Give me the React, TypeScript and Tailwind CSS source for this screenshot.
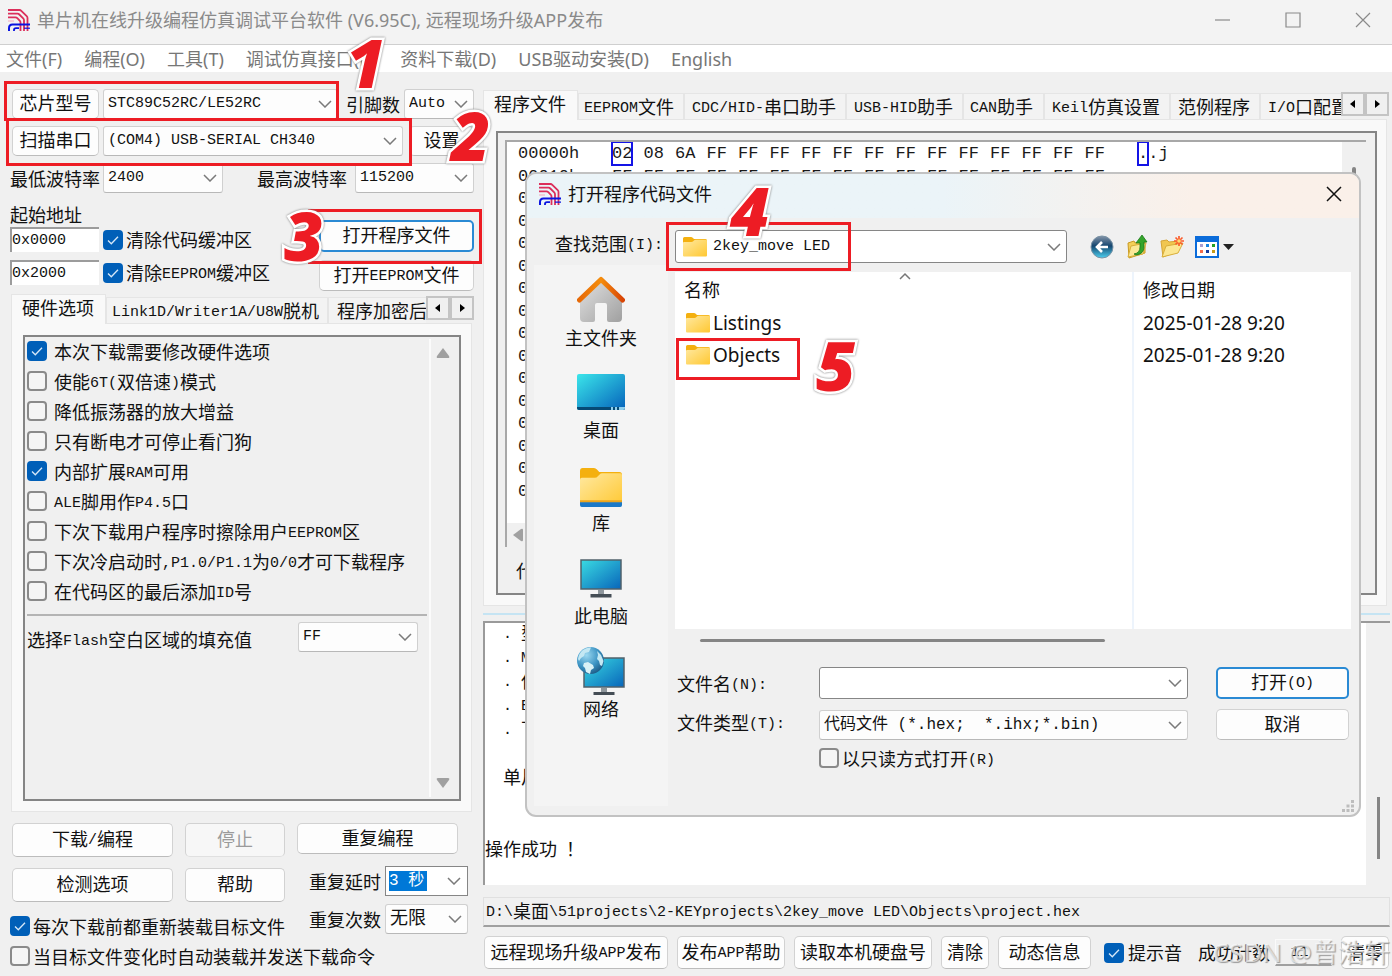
import React from "react";

const MONO = "font-['Liberation_Mono','Noto_Sans_CJK_SC',monospace]";
const UI = "font-['Noto_Sans','Noto_Sans_CJK_SC',sans-serif]";

/* Latin runs are set at half the width of the Chinese characters. */
function T({ children }: { children: string }) {
  return (
    <>
      {children.split(/([\x20-\x7e]+)/).map((part, i) =>
        i % 2 ? (
          <span key={i} className={`whitespace-pre align-[2px] text-[15px] leading-none ${MONO}`}>
            {part}
          </span>
        ) : (
          part
        ),
      )}
    </>
  );
}

function Logo() {
  return (
    <svg width="22" height="22" viewBox="0 0 22 22" fill="none" className="shrink-0">
      <g stroke="#dc2f5b" strokeWidth="1.8">
        <path d="M0 1h11.500q1 0 1.800.8l5.400 5.400q.8.8.8 1.800v13" />
        <path d="M0 4.700h9.500q1 0 1.800.8l3.900 3.900q.8.8.8 1.800V22" />
        <path d="M0 8.400h7.500q1 0 1.800.8l2.400 2.400q.8.8.8 1.800V22" />
        <path d="M0 12h6" stroke="#f4a8bb" strokeWidth="1" />
      </g>
      <g stroke="#0a14e0">
        <path d="M1 22v-3q0-3.500 3.500-3.500H22" strokeWidth="2" />
        <path d="M6 22v-1q0-1.800 2-1.800h3" strokeWidth="1.800" />
        <path d="M16 19.200h6" strokeWidth="1.200" />
      </g>
    </svg>
  );
}

function Chevron() {
  return (
    <svg width="14" height="8" viewBox="0 0 14 8" fill="none" stroke="#7a7a7a" strokeWidth="1.5">
      <path d="M1 1l6 6 6-6" />
    </svg>
  );
}

function Select({ label, value, className = "", size = "text-[15px]" }: { label: string; value: string; className?: string; size?: string }) {
  return (
    <span className={`relative flex h-[30px] ${MONO} ${className}`}>
      <select
        aria-label={label}
        className={`w-full appearance-none whitespace-pre rounded-[3px] border border-[#d0d0d0] border-b-[#b8b8b8] bg-[#fdfdfd] pl-1 pr-6 ${size}`}
      >
        <option>{value}</option>
      </select>
      <span className="pointer-events-none absolute inset-y-0 right-[6px] flex items-center">
        <Chevron />
      </span>
    </span>
  );
}

function Btn({ children, className = "", primary = false, disabled = false }: { children: string; className?: string; primary?: boolean; disabled?: boolean }) {
  return (
    <button
      disabled={disabled}
      className={`shrink-0 whitespace-nowrap rounded-[5px] border pb-1 text-center ${primary ? "border-2 border-[#2a8ad4]" : "border-[#d2d2d2] border-b-[#bcbcbc]"} ${disabled ? "border-b-[#e0e0e0] bg-[#f7f7f7] text-[#9b9b9b]" : "bg-[#fdfdfd]"} ${className}`}
    >
      <T>{children}</T>
    </button>
  );
}

function Check({ label, checked = false, gap = "gap-[7px]" }: { label: string; checked?: boolean; gap?: string }) {
  return (
    <label className={`flex h-5 items-center whitespace-nowrap ${gap}`}>
      <span className="grid shrink-0">
        <input
          type="checkbox"
          defaultChecked={checked}
          className="peer size-5 appearance-none rounded-[4px] border-2 border-[#8a8a8a] bg-[#f5f5f5] [grid-area:1/1] checked:border-[#005fb8] checked:bg-[#005fb8]"
        />
        <svg viewBox="0 0 20 20" fill="none" stroke="#d6e8f8" strokeWidth="1.3" className="pointer-events-none invisible size-5 [grid-area:1/1] peer-checked:visible">
          <path d="M5 10.500l3.300 3.300L15 6.800" />
        </svg>
      </span>
      <span className="pb-px">
        <T>{label}</T>
      </span>
    </label>
  );
}

function TabArrows() {
  return (
    <div className="mt-[2px] flex h-6 w-12 shrink-0">
      {["M7 0v8L2 4z", "M3 0v8l5-4z"].map((d, i) => (
        <button key={d} aria-label={i ? "下一个" : "上一个"} className="flex flex-1 items-center justify-center border-2 border-[#c4c4c4] bg-[#f0f0f0]">
          <svg width="10" height="8" viewBox="0 0 10 8">
            <path d={d} />
          </svg>
        </button>
      ))}
    </div>
  );
}

function Tab({ children, active = false, className = "" }: { children: string; active?: boolean; className?: string }) {
  return (
    <button
      role="tab"
      aria-selected={active}
      className={`shrink-0 whitespace-nowrap border border-[#e5e5e5] text-left ${active ? "h-[30px] border-b-0 bg-[#f9f9f9] pb-[6px]" : "h-[27px] bg-[#f3f3f3] pb-[2px]"} ${className}`}
    >
      <T>{children}</T>
    </button>
  );
}

function Title() {
  return (
    <header className={`flex h-[45px] items-center border-b border-[#cfcfcf] bg-[#f3f3f3] pb-1 pl-2 text-[18px] text-[#8a8a8a] ${UI}`}>
      <Logo />
      <h1 className="ml-[7px] flex-1 whitespace-nowrap">单片机在线升级编程仿真调试平台软件 (V6.95C), 远程现场升级APP发布</h1>
      <div className="flex">
        {["M0 8h15", "M1 1h14v14H1z", "M1 1l14 14M15 1L1 15"].map((d, i) => (
          <button key={d} aria-label={["最小化", "最大化", "关闭"][i]} className="flex w-[70px] justify-center pl-3">
            <svg width="16" height="16" viewBox="0 0 16 16" fill="none" stroke="#8a8a8a" strokeWidth="1.2">
              <path d={d} />
            </svg>
          </button>
        ))}
      </div>
    </header>
  );
}

const MENU = ["文件(F)", "编程(O)", "工具(T)", "调试仿真接口(N)", "资料下载(D)", "USB驱动安装(D)", "English"];

const OPTIONS: [string, boolean][] = [
  ["本次下载需要修改硬件选项", true],
  ["使能6T(双倍速)模式", false],
  ["降低振荡器的放大增益", false],
  ["只有断电才可停止看门狗", false],
  ["内部扩展RAM可用", true],
  ["ALE脚用作P4.5口", false],
  ["下次下载用户程序时擦除用户EEPROM区", false],
  ["下次冷启动时,P1.0/P1.1为0/0才可下载程序", false],
  ["在代码区的最后添加ID号", false],
];

function AddressRow({ value, label }: { value: string; label: string }) {
  return (
    <div className="flex h-[25px] items-center">
      <input aria-label={label} defaultValue={value} className={`mr-1 h-[25px] w-[89px] border-l-2 border-t-2 border-[#9c9c9c] bg-white text-[15px] ${MONO}`} />
      <Check label={label} checked gap="gap-[3px]" />
    </div>
  );
}

function LeftPanel() {
  return (
    <section className="flex w-[483px] shrink-0 flex-col pb-[10px] pl-[10px] pr-[9px] pt-[17px]">
      <div className="flex flex-col gap-[7px]">
        <div className="flex items-center">
          <Btn className="ml-[2px] h-[30px] w-[87px]">芯片型号</Btn>
          <Select label="芯片型号" value="STC89C52RC/LE52RC" className="ml-1 w-[235px]" />
          <span className="ml-2 w-[58px]">引脚数</span>
          <Select label="引脚数" value="Auto" className="flex-1" />
        </div>
        <div className="flex items-center">
          <Btn className="ml-[2px] h-[30px] w-[87px]">扫描串口</Btn>
          <Select label="扫描串口" value="(COM4) USB-SERIAL CH340" className="ml-1 w-[300px]" />
          <Btn className="ml-[6px] h-[30px] flex-1">设置</Btn>
        </div>
        <div className="flex items-center">
          <span className="w-[93px]">最低波特率</span>
          <Select label="最低波特率" value="2400" className="w-[120px]" />
          <span className="ml-[34px] flex-1">最高波特率</span>
          <Select label="最高波特率" value="115200" className="w-[119px]" />
        </div>
      </div>

      <div className="mt-[10px] flex justify-between">
        <div>
          <div className="h-6">起始地址</div>
          <div className="flex flex-col gap-2">
            <AddressRow value="0x0000" label="清除代码缓冲区" />
            <AddressRow value="0x2000" label="清除EEPROM缓冲区" />
          </div>
        </div>
        <div className="flex w-[155px] flex-col gap-2 pt-[17px]">
          <Btn primary className="h-8">打开程序文件</Btn>
          <Btn className="h-[31px]">打开EEPROM文件</Btn>
        </div>
      </div>

      <div role="tablist" className="relative z-10 -mb-px mt-[3px] flex pl-px">
        <div className="flex min-w-0 flex-1 items-end overflow-hidden">
          <Tab active className="w-[95px] px-[10px]">硬件选项</Tab>
          <Tab className="w-[222px] pl-[5px]">Link1D/Writer1A/U8W脱机</Tab>
          <Tab className="pl-2">程序加密后传输</Tab>
        </div>
        <TabArrows />
      </div>
      <div className="ml-px mr-[2px] flex flex-1 flex-col border border-[#e5e5e5] bg-[#f9f9f9] p-[11px] pb-[10px] pr-[10px]">
        <div className="flex flex-1 border-2 border-[#858585] bg-[#f0f0f0] py-[2px]">
          <div className="min-w-0 flex-1 pl-[2px]">
            <div className="flex flex-col gap-[10px] pt-[2px]">
              {OPTIONS.map(([label, on]) => (
                <Check key={label} label={label} checked={on} />
              ))}
            </div>
            <hr className="mt-[13px] border-t-2 border-[#b4b4b4]" />
            <div className="mt-[6px] flex items-center">
              <span className="w-[271px] pt-1">
                <T>选择Flash空白区域的填充值</T>
              </span>
              <Select label="填充值" value="FF" className="w-[120px]" />
            </div>
          </div>
          <div className="ml-[2px] flex w-[30px] flex-col items-center justify-between border-l-2 border-[#fbfbfb] py-[9px] pr-1">
            <svg width="14" height="10" viewBox="0 0 14 10" fill="#a0a0a0">
              <path d="M7 0l6 8q1 2-1 2H2q-2 0-1-2z" />
            </svg>
            <svg width="14" height="10" viewBox="0 0 14 10" fill="#a0a0a0">
              <path d="M7 10L1 2q-1-2 1-2h10q2 0 1 2z" />
            </svg>
          </div>
        </div>
      </div>

      <div className="mt-[11px] flex gap-3 pl-[2px]">
        <div className="w-[273px]">
          <div className="grid grid-cols-[161px_100px] gap-x-3 gap-y-[11px]">
            <Btn className="h-[34px]">下载/编程</Btn>
            <Btn disabled className="h-[34px]">停止</Btn>
            <Btn className="h-[34px]">检测选项</Btn>
            <Btn className="h-[34px]">帮助</Btn>
          </div>
          <div className="-ml-[2px] mt-[14px]">
            <Check checked label="每次下载前都重新装载目标文件" gap="gap-[3px]" />
          </div>
        </div>
        <div className="flex w-[171px] flex-col gap-2">
          <Btn className="mb-1 h-[31px] w-[161px]">重复编程</Btn>
          <div className="flex items-center justify-between pl-3">
            <label htmlFor="delay">重复延时</label>
            <span className="flex h-[30px] w-[83px] items-center justify-between border border-[#868686] bg-white pl-[3px] pr-[6px]">
              <input id="delay" defaultValue="3 秒" className={`h-5 w-[38px] bg-[#0078d7] text-[16px] text-white ${MONO}`} />
              <Chevron />
            </span>
          </div>
          <div className="flex items-center justify-between pl-3">
            <span>重复次数</span>
            <Select label="重复次数" value="无限" size="text-[18px]" className="w-[83px]" />
          </div>
        </div>
      </div>
      <div className="mt-[10px]">
        <Check label="当目标文件变化时自动装载并发送下载命令" gap="gap-[3px]" />
      </div>
    </section>
  );
}

const HEX_BYTES: string[][] = [
  ["02", "08", "6A", ...Array<string>(13).fill("FF")],
  Array<string>(16).fill("FF"),
];

function HexView() {
  return (
    <div className="flex h-[407px] flex-col overflow-hidden border-l-2 border-t-2 border-[#a8a8a8] bg-white">
      <div className="flex flex-1">
        <div className={`grid h-[361px] flex-1 grid-rows-16 overflow-hidden pl-[11px] pt-px text-[17px] ${MONO}`}>
          {Array.from({ length: 16 }, (_, r) => (
            <div key={r} className="flex items-center text-[#1a1a1a]">
              <span className="w-[94px] shrink-0">{`000${r.toString(16).toUpperCase()}0h`}</span>
              <span className="grid w-[504px] shrink-0 grid-cols-16">
                {(HEX_BYTES[r] ?? []).map((b, c) => (
                  <span key={c}>
                    <span className={r + c === 0 ? "bg-white py-[2px] outline-2 -outline-offset-1 outline-[#1414e6]" : ""}>{b}</span>
                  </span>
                ))}
              </span>
              {r === 0 && (
                <span className="ml-[22px]">
                  <span className="py-[2px] outline-2 -outline-offset-1 outline-[#1414e6]">.</span>.j
                </span>
              )}
            </div>
          ))}
        </div>
        <div className="flex w-6 justify-center bg-[#f0f0f0] pt-[25px]">
          <div className="h-10 w-1 rounded bg-[#858585]" />
        </div>
      </div>
      <div className="flex h-6 items-center bg-[#f0f0f0] pl-[6px]">
        <svg width="10" height="14" viewBox="0 0 10 14" fill="#a0a0a0">
          <path d="M0 7l8-6q2-1 2 1v10q0 2-2 1z" />
        </svg>
      </div>
    </div>
  );
}

const LOG = ["  . 型号: STC89C52RC", "  . MCU固件版本号", "  . 使用扩展RAM", "  . EEPROM", "  . 下次下载", "", "  单片机型号", "", "", "操作成功 ！"];

function RightPanel() {
  return (
    <section className="flex min-w-0 flex-1 flex-col pb-[7px] pt-[18px]">
      <div role="tablist" className="relative z-10 -mb-px mr-[3px] flex">
        <div className="flex min-w-0 flex-1 items-end overflow-hidden">
          <Tab active className="w-[95px] pl-[10px]">程序文件</Tab>
          <Tab className="w-[106px] pl-[5px]">EEPROM文件</Tab>
          <Tab className="w-[162px] pl-[7px]">CDC/HID-串口助手</Tab>
          <Tab className="w-[117px] pl-[7px]">USB-HID助手</Tab>
          <Tab className="w-[81px] pl-[6px]">CAN助手</Tab>
          <Tab className="w-[126px] pl-[7px]">Keil仿真设置</Tab>
          <Tab className="w-[90px] pl-[7px]">范例程序</Tab>
          <Tab className="pl-[7px]">I/O口配置工具</Tab>
        </div>
        <TabArrows />
      </div>
      <div className="mr-[5px] border border-[#e5e5e5] bg-[#f9f9f9] pb-[10px] pl-3 pr-[9px] pt-[11px]">
        <div className="h-[464px] border-2 border-[#858585] bg-[#f0f0f0] pl-[7px] pr-[9px] pt-[7px]">
          <HexView />
          <div className="flex h-[46px] items-center pl-[11px]">代码长度</div>
        </div>
      </div>
      <div className="mr-[2px] mt-[7px] h-[2px] bg-[#c5e4f3]" />
      <div className="mr-[2px] mt-[6px] flex min-h-[264px] flex-1 border-l-2 border-t-2 border-[#9a9a9a] bg-white">
        <div className="flex-1">
          {LOG.map((line, i) => (
            <div key={i} className="h-6 leading-[18px]">
              <T>{line}</T>
            </div>
          ))}
        </div>
        <div className="flex w-6 justify-center bg-[#f0f0f0] pt-[174px]">
          <div className="h-[62px] w-[3px] bg-[#858585]" />
        </div>
      </div>
      <div className="mr-[2px] mt-3 flex h-[30px] items-center border border-b-2 border-[#e0e0e0] border-b-[#a0a0a0] pb-[3px] pl-[2px]">
        <span>
          <T>D:\桌面\51projects\2-KEYprojects\2key_move LED\Objects\project.hex</T>
        </span>
      </div>
      <div className="mr-[3px] mt-[9px] flex h-[33px] items-center gap-[9px] pl-px">
        <Btn className="h-full w-[184px]">远程现场升级APP发布</Btn>
        <Btn className="h-full w-[108px]">发布APP帮助</Btn>
        <Btn className="h-full w-[138px]">读取本机硬盘号</Btn>
        <Btn className="h-full w-[48px]">清除</Btn>
        <Btn className="mr-1 h-full w-[93px]">动态信息</Btn>
        <Check checked label="提示音" gap="gap-1" />
        <label className="ml-[7px] flex items-center gap-[5px] whitespace-nowrap">
          <span className="pb-[2px]">成功计数</span>
          <input defaultValue="11" className={`h-[27px] w-[57px] border border-b-2 border-[#fafafa] border-b-[#a0a0a0] pr-2 text-center text-[15px] ${MONO}`} />
        </label>
        <Btn className="h-full w-[48px]">清零</Btn>
      </div>
    </section>
  );
}

function Folder({ big = false }: { big?: boolean }) {
  return (
    <svg viewBox="0 0 24 20" className={big ? "h-[39px] w-[42px] shrink-0" : "h-5 w-6 shrink-0"} preserveAspectRatio="none">
      <defs>
        <linearGradient id="folder" x1="0" y1="0" x2="1" y2="1">
          <stop offset="0" stopColor="#ffe9a2" />
          <stop offset="1" stopColor="#ffc832" />
        </linearGradient>
      </defs>
      <path d="M0 1.500Q0 0 1.500 0h6.500q1 0 1.700.8L11 2H22.500Q24 2 24 3.500V9H0z" fill="#f4b00f" />
      <path d="M0 6q0-1 1-1h7.500q1 0 1.700-.8l1-.9q.6-.6 1.500-.6H23q1 0 1 1V18.500q0 1-1 1H1q-1 0-1-1z" fill="url(#folder)" />
      {big && <path d="M0 16.500h24V17.800H0z" fill="#eda51c" />}
      {big && <path d="M0 17.500h24V19q0 1-1 1H1q-1 0-1-1z" fill="#1a78c8" />}
    </svg>
  );
}

function Screen({ globe = false }: { globe?: boolean }) {
  return (
    <svg width="48" height={globe ? 48 : 39} viewBox={globe ? "0 0 48 48" : "0 0 48 39"}>
      <defs>
        <linearGradient id="screen" x1="0" y1="0" x2="1" y2="1">
          <stop offset="0" stopColor="#3adbe2" />
          <stop offset="1" stopColor="#0865ba" />
        </linearGradient>
        <radialGradient id="globe" cx=".35" cy=".3" r=".75">
          <stop offset="0" stopColor="#9bd8f0" />
          <stop offset=".6" stopColor="#3d94c4" />
          <stop offset="1" stopColor="#1e5b86" />
        </radialGradient>
      </defs>
      <g transform={globe ? "translate(3 10)" : undefined}>
        <path d="M21 31h6v4h-6z" fill="#8e969c" />
        <path d="M13.500 35h21v3.500h-21z" fill="#444d55" />
        <rect x="4" y="1" width="40" height="29" fill="url(#screen)" stroke="#50616b" strokeWidth="1.500" />
      </g>
      {globe && (
        <g>
          <circle cx="13.500" cy="13.500" r="13.500" fill="url(#globe)" />
          <path d="M1 12q1-6 5-9 4-3 8-2.500l-2 4.500-4 1-1 3-3 2-2 3z" fill="#c4e8f3" />
          <path d="M7 16l4-1 5 3 1 3-3 2-1 4-4-2-1-4-2-2z" fill="#d9f1f6" />
          <path d="M20 4l4 4 2.500 6-1.500 5-2-1-1-4-2-2 1-4z" fill="#c4e8f3" />
        </g>
      )}
    </svg>
  );
}

function House() {
  return (
    <svg width="48" height="47" viewBox="0 0 48 47">
      <defs>
        <linearGradient id="wall" x1="0" y1="0" x2="1" y2="1">
          <stop offset="0" stopColor="#e2e2e2" />
          <stop offset="1" stopColor="#a0a0a0" />
        </linearGradient>
        <linearGradient id="roof">
          <stop offset="0" stopColor="#e66a08" />
          <stop offset=".5" stopColor="#f58d0c" />
          <stop offset="1" stopColor="#d84505" />
        </linearGradient>
      </defs>
      <path d="M24 4L3 26V42q0 4 4 4h9q2 0 2-2V29q0-2 2-2h8q2 0 2 2V44q0 2 2 2h9q4 0 4-4V26z" fill="url(#wall)" />
      <path d="M2.500 24L24 3.500 45.500 24" fill="none" stroke="url(#roof)" strokeWidth="5" strokeLinecap="round" strokeLinejoin="round" />
    </svg>
  );
}

function Desktop() {
  return (
    <svg width="48" height="37" viewBox="0 0 48 37">
      <defs>
        <linearGradient id="desk" x1="0" y1="0" x2="1" y2="1">
          <stop offset="0" stopColor="#3be6ea" />
          <stop offset="1" stopColor="#0562bb" />
        </linearGradient>
      </defs>
      <rect y="0" width="48" height="36" rx="2" fill="url(#desk)" />
      <path d="M0 33h48v1q0 2-2 2H2q-2 0-2-2z" fill="#064a75" />
      <path d="M34 33h2v3h-2zM38 33h2v3h-2zM42 33h6v1q0 2-2 2h-4z" fill="#8fd0ee" />
    </svg>
  );
}

const PLACES: [string, React.ReactNode, string][] = [
  ["主文件夹", <House />, "pt-[11px] h-[89px]"],
  ["桌面", <Desktop />, "pt-5 h-[92px]"],
  ["库", <Folder big />, "pt-[22px] h-[93px]"],
  ["此电脑", <Screen />, "pt-5 h-[93px]"],
  ["网络", <Screen globe />, "pt-[15px] h-[93px]"],
];

function Toolbar() {
  return (
    <div className="ml-[23px] flex items-center gap-[11px]">
      <button aria-label="后退">
        <svg width="24" height="24" viewBox="0 0 24 24">
          <defs>
            <linearGradient id="back" x2="0" y2="1">
              <stop offset="0" stopColor="#8494a8" />
              <stop offset=".45" stopColor="#15466f" />
              <stop offset="1" stopColor="#4cd0f0" />
            </linearGradient>
          </defs>
          <circle cx="12" cy="12" r="11" fill="url(#back)" stroke="#7992a5" />
          <path d="M18 12H7M12 7l-5 5 5 5" fill="none" stroke="#fff" strokeWidth="2.600" />
        </svg>
      </button>
      <button aria-label="向上一级">
        <svg width="24" height="24" viewBox="0 0 24 24">
          <path d="M3 8l6-2 1 2 10-2v12L4 23z" fill="#f3cf58" stroke="#c99a24" />
          <path d="M3 22l3-11 15-3-3 11z" fill="#fbe897" stroke="#d8ae3a" />
          <path d="M9 19q6-1 6-7V8h-4l6-8 5 7h-3v5q0 7-8 8z" fill="#35a52c" stroke="#1a7a18" strokeWidth=".8" />
        </svg>
      </button>
      <button aria-label="新建文件夹">
        <svg width="24" height="24" viewBox="0 0 24 24">
          <path d="M1 6l6-1 2 2 9-1v10L3 22z" fill="#f0c650" stroke="#d5a436" />
          <path d="M2 22L6 11l17-3-5 10z" fill="#fce793" stroke="#d8ae3a" />
          <path d="M19 1v10M14 6h10M15.500 2.500l7 7M22.500 2.500l-7 7" stroke="#fb5b2c" strokeWidth="1.700" />
          <circle cx="19" cy="6" r="1.800" fill="#ffdc72" />
        </svg>
      </button>
      <button aria-label="查看" className="flex items-center gap-1">
        <svg width="24" height="22" viewBox="0 0 24 22">
          <rect x="1" y="1" width="22" height="20" fill="#fff" stroke="#0b6cda" strokeWidth="2" />
          <path d="M1 1h22v5H1z" fill="#0b6cda" />
          <path d="M5 8h3v3H5z" fill="#a89dd0" />
          <path d="M11 8h3v3h-3z" fill="#1685e0" />
          <path d="M17 8h3v3h-3z" fill="#24a024" />
          <path d="M5 14h3v3H5z" fill="#f56c4a" />
          <path d="M11 14h3v3h-3z" fill="#173c9c" />
          <path d="M17 14h3v3h-3z" fill="#c79b18" />
        </svg>
        <svg width="11" height="6" viewBox="0 0 11 6">
          <path d="M0 0h11L5.500 6z" fill="#222" />
        </svg>
      </button>
    </div>
  );
}

function OpenDialog() {
  return (
    <div role="dialog" aria-label="打开程序代码文件" className="absolute left-[525px] top-[172px] z-20 w-[836px] overflow-hidden rounded-[11px] border-2 border-[#c2c2c2] bg-[#f0f0f0]">
      <div className={`flex h-11 items-center bg-linear-to-r from-[#ebf4f8] from-50% to-[#faf0e9] to-80% pb-1 pl-3 pr-[17px] ${UI}`}>
        <Logo />
        <h2 className="ml-[7px] flex-1">打开程序代码文件</h2>
        <button aria-label="关闭">
          <svg width="16" height="16" viewBox="0 0 16 16" stroke="#111" strokeWidth="1.500">
            <path d="M1 1l14 14M15 1L1 15" />
          </svg>
        </button>
      </div>
      <div className="flex h-[47px] items-center pt-[10px]">
        <label htmlFor="lookin" className="w-[148px] whitespace-nowrap pb-[8px] pl-7">
          <T>查找范围(I):</T>
        </label>
        <span className={`relative flex h-[33px] w-[392px] items-center ${MONO}`}>
          <select id="lookin" className="size-full appearance-none rounded-[3px] border border-[#868686] bg-white pl-[37px] text-[15px]">
            <option>2key_move LED</option>
          </select>
          <span className="pointer-events-none absolute left-2">
            <Folder />
          </span>
          <span className="pointer-events-none absolute right-[6px]">
            <Chevron />
          </span>
        </span>
        <Toolbar />
      </div>
      <div className="flex pl-[7px]">
        <nav className={`flex h-[541px] w-[134px] shrink-0 flex-col bg-[#f4f4f4] ${UI}`}>
          {PLACES.map(([name, icon, cls]) => (
            <button key={name} className={`flex shrink-0 flex-col items-center justify-between leading-6 ${cls}`}>
              {icon}
              <span className="mb-[4px]">{name}</span>
            </button>
          ))}
        </nav>
        <div className="ml-[7px] min-w-0 flex-1 pt-[7px]">
          <div className={`mr-2 flex h-[357px] bg-white ${UI}`}>
            <div className="relative w-[459px] shrink-0 border-r-2 border-[#edf4fc]">
              <svg width="12" height="8" viewBox="0 0 12 8" fill="none" stroke="#777" strokeWidth="1.500" className="absolute left-[224px] top-0">
                <path d="M1 7l5-5 5 5" />
              </svg>
              <div className="flex h-[35px] items-center pl-[9px]">名称</div>
              {["Listings", "Objects"].map((n) => (
                <div key={n} className="flex h-8 items-center gap-[3px] pl-[11px] text-[19px]">
                  <Folder />
                  {n}
                </div>
              ))}
            </div>
            <div className="pl-[9px]">
              <div className="flex h-[35px] items-center">修改日期</div>
              {[0, 1].map((n) => (
                <div key={n} className="flex h-8 items-center text-[19px]">
                  2025-01-28 9:20
                </div>
              ))}
            </div>
          </div>
          <div className="ml-[25px] mt-[10px] h-[3px] w-[405px] rounded bg-[#858585]" />
          <div className="mt-[25px] grid grid-cols-[142px_369px_132px] items-center gap-y-[10px] pl-[2px]">
            <label htmlFor="fname" className="pb-px">
              <T>文件名(N):</T>
            </label>
            <span className="relative flex h-8 items-center">
              <input id="fname" className="size-full rounded-[3px] border border-[#868686] bg-white pl-1 pr-6" />
              <span className="pointer-events-none absolute right-[6px]">
                <Chevron />
              </span>
            </span>
            <Btn primary className="ml-7 h-8 w-[133px]">打开(O)</Btn>
            <span className="pb-[6px]">
              <T>文件类型(T):</T>
            </span>
            <Select label="文件类型" value={"代码文件 (*.hex;\u00a0 *.ihx;*.bin)"} size="text-[16px]" />
            <Btn className="ml-7 h-[31px] w-[133px]">取消</Btn>
          </div>
          <div className="ml-[144px] mt-2">
            <Check label="以只读方式打开(R)" gap="gap-[3px]" />
          </div>
        </div>
      </div>
      <div className="h-[9px]" />
      <svg width="12" height="12" viewBox="0 0 12 12" fill="#bdbdbd" className="absolute bottom-[3px] right-[5px]">
        <path d="M9 0h3v3H9zM4.500 4.500h3v3h-3zM9 4.500h3v3H9zM0 9h3v3H0zM4.500 9h3v3h-3zM9 9h3v3H9z" />
      </svg>
    </div>
  );
}

const BOXES = [
  "left-[4px] top-[81px] h-[40px] w-[335px]",
  "left-[6px] top-[118px] h-[48px] w-[406px]",
  "left-[308px] top-[209px] h-[55px] w-[174px]",
  "left-[666px] top-[222px] h-[49px] w-[185px]",
  "left-[676px] top-[338px] h-[42px] w-[124px]",
];
const STEPS = [
  "left-[346px] top-[27px]",
  "left-[451px] top-[100px]",
  "left-[284px] top-[200px]",
  "left-[730px] top-[175px]",
  "left-[816px] top-[330px]",
];

function Annotations() {
  return (
    <div className="pointer-events-none absolute inset-0 z-30 overflow-hidden">
      {BOXES.map((c) => (
        <div key={c} className={`absolute border-3 border-[#ed1c24] ${c}`} />
      ))}
      {STEPS.map((c, i) => (
        <span
          key={c}
          className={`absolute font-['Open_Sans','Noto_Sans',sans-serif] text-[68px] font-extrabold italic leading-[70px] text-[#ed1c24] drop-shadow-[0_0_1px_#777] [-webkit-text-stroke:5px_white] [paint-order:stroke_fill] ${c}`}
        >
          {i + 1}
        </span>
      ))}
      <span className={`absolute bottom-[6px] right-[2px] text-[26px] leading-9 text-white/60 [text-shadow:1px_1px_1px_#9a9a9a] ${UI}`}>CSDN @曾浩轩</span>
    </div>
  );
}

export default function App() {
  return (
    <div className="relative flex min-h-screen flex-col overflow-hidden bg-[#f0f0f0] font-['Noto_Sans_CJK_SC','Liberation_Mono',sans-serif] text-[18px] leading-[22px] text-[#111]">
      <Title />
      <nav className={`flex h-[27px] items-center gap-[22px] bg-white pl-[6px] text-[18px] text-[#777] ${UI}`}>
        {MENU.map((m) => (
          <a key={m} href="#" className="whitespace-nowrap">
            {m}
          </a>
        ))}
      </nav>
      <main className="flex flex-1">
        <LeftPanel />
        <RightPanel />
      </main>
      <OpenDialog />
      <Annotations />
    </div>
  );
}
